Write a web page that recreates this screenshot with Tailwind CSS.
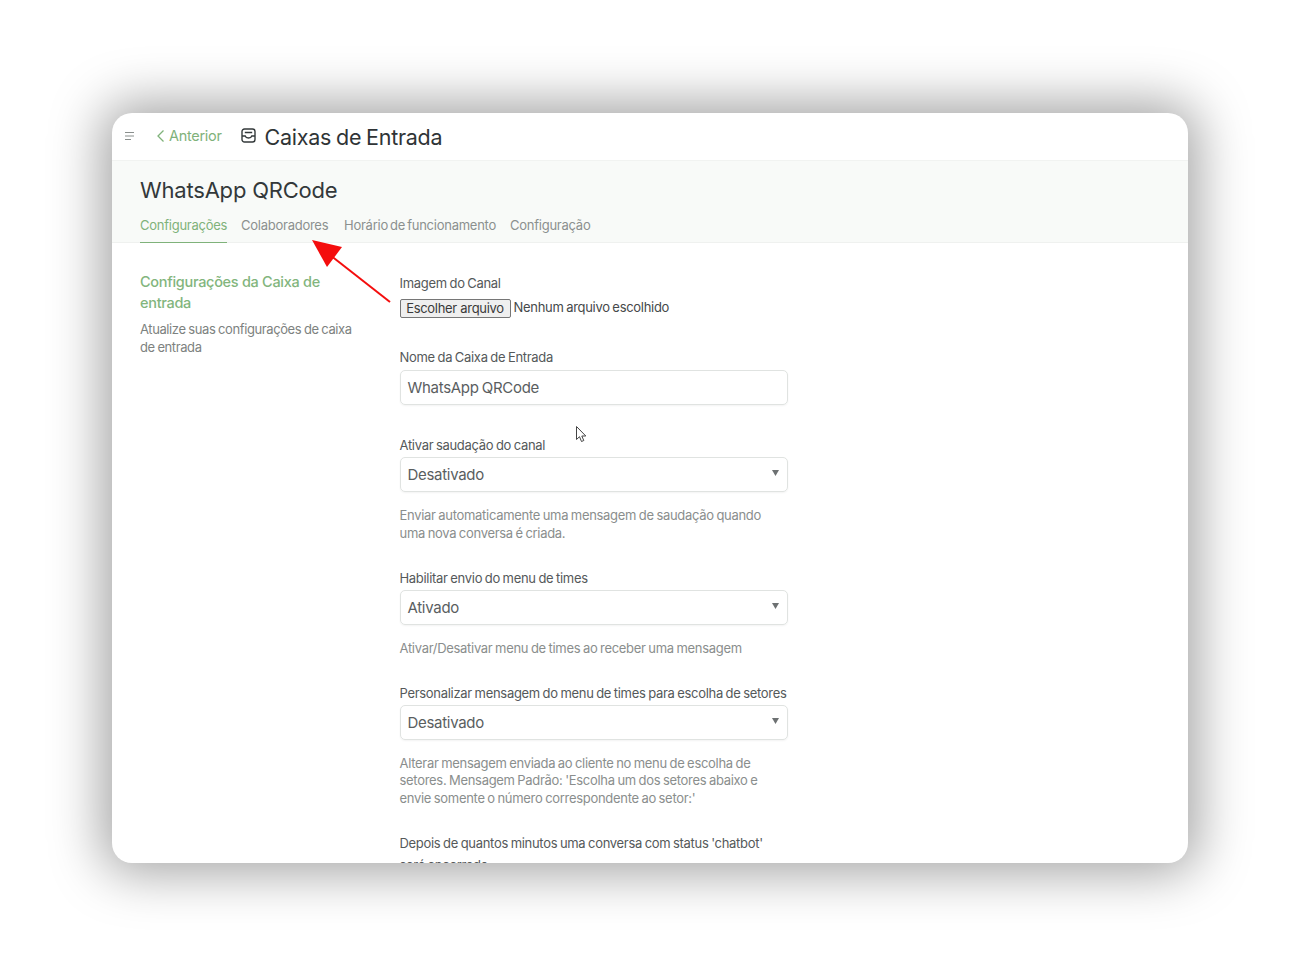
<!DOCTYPE html>
<html lang="pt-BR">
<head>
    <meta charset="UTF-8">
    <title>Caixas de Entrada</title>
    <script src="https://cdn.jsdelivr.net/npm/@tailwindcss/browser@4"></script>
</head>
<body class="bg-white h-[976px] overflow-hidden pt-[113px] font-['Inter',sans-serif] text-[#3c4858]">
    <div class="relative ml-[112px] w-[1076px] h-[750px] bg-white rounded-[20px] shadow-[0_0_52px_10px_rgba(0,0,0,0.36)] overflow-hidden">
        <!-- top bar -->
        <header class="h-[48px] flex items-center border-b border-[#f1f3f1] pl-[12px]">
            <svg class="w-[11px] h-[10px] text-[#8a8f8d] mt-[-2px]" viewBox="0 0 11 10" fill="none" stroke="currentColor" stroke-width="1.1"><path d="M1 1.500h9M1 5h9M1 8.500h6"/></svg>
            <a class="flex items-center ml-[21px] text-[14.500px] tracking-[-0.3px] text-[#7fb27a] mt-[-2px]">
                <svg class="w-[9px] h-[14px] mr-[4px]" viewBox="0 0 9 14" fill="none" stroke="currentColor" stroke-width="1.300"><path d="M7.500 1.500 2 7l5.500 5.500"/></svg>
                Anterior
            </a>
            <svg class="w-[15px] h-[15px] ml-[19px] text-[#33393a] mt-[-2px]" viewBox="0 0 15 15" fill="none" stroke="currentColor" stroke-width="1.400"><rect x="1" y="1" width="13" height="13" rx="2.500"/><path d="M3.800 4.500h7.400M1 8h3.200c.4 1.300 1.600 2 3.300 2s2.900-.7 3.300-2H14"/></svg>
            <h1 class="ml-[9px] text-[21.500px] tracking-[-0.25px] [word-spacing:-1px] text-[#2f3436] pt-[2px]">Caixas de Entrada</h1>
        </header>

        <!-- sub header with tabs -->
        <section class="h-[82px] bg-[#f8faf8] border-b border-[#eff1ef] pl-[28px] flex flex-col">
            <h2 class="text-[22px] leading-[28px] mt-[15px] tracking-[-0.2px] text-[#33383a]">WhatsApp QRCode</h2>
            <nav class="flex gap-[14px] mt-[8px] text-[13px] tracking-[-0.25px] [word-spacing:-1.300px] text-[#8b908f]">
                <a class="h-[31px] pt-[4px] text-[#7fb27a] border-b border-[#7fb27a] w-[87px] whitespace-nowrap">Configurações</a>
                <a class="pt-[4px] w-[89px] whitespace-nowrap">Colaboradores</a>
                <a class="pt-[4px] w-[152px] whitespace-nowrap">Horário de funcionamento</a>
                <a class="pt-[4px] whitespace-nowrap">Configuração</a>
            </nav>
        </section>

        <!-- body -->
        <div class="flex pl-[28px]">
            <aside class="w-[259.500px] shrink-0 pt-[28px]">
                <h3 class="text-[14.500px] leading-[21px] font-medium tracking-[-0.3px] text-[#82b57d] w-[200px]">Configurações da Caixa de entrada</h3>
                <p class="text-[13px] leading-[17.500px] tracking-[-0.4px] [word-spacing:-0.6px] text-[#7d8280] mt-[8px] w-[222px]">Atualize suas configurações de caixa de entrada</p>
            </aside>

            <form class="w-[388.500px] pt-[32px] text-[13px] tracking-[-0.3px] [word-spacing:-0.7px]">
                <label class="block leading-[17px] text-[#55595a]">Imagem do Canal</label>
                <div class="flex items-center mt-[6px] h-[20px]">
                    <button type="button" class="h-[19px] w-[111px] bg-[#efefef] border border-[#767676] rounded-[2px] text-[#3a3a3a] text-[13px] leading-none">Escolher arquivo</button>
                    <span class="ml-[3px] text-[#45494a]">Nenhum arquivo escolhido</span>
                </div>

                <label class="block leading-[17px] text-[#55595a] mt-[31px]">Nome da Caixa de Entrada</label>
                <div class="mt-[4px] h-[35px] border border-[#e0e3e1] rounded-[5px] shadow-[0_1px_2px_rgba(0,0,0,0.05)] flex items-center px-[7px] pt-[2px] text-[15px] tracking-[-0.3px] text-[#5a5e5f]">WhatsApp QRCode</div>

                <label class="block leading-[17px] text-[#55595a] mt-[32px]">Ativar saudação do canal</label>
                <div class="mt-[3px] h-[35px] border border-[#e0e3e1] rounded-[5px] shadow-[0_1px_2px_rgba(0,0,0,0.05)] flex items-center justify-between pl-[7px] pr-[8px] pt-[2px] text-[15px] tracking-[-0.3px] text-[#5a5e5f]">
                    Desativado
                    <svg class="w-[7px] h-[6px] text-[#6d7172] mt-[-5px]" viewBox="0 0 7 6" fill="currentColor"><path d="M0 0h7L3.500 6z"/></svg>
                </div>
                <p class="mt-[15px] leading-[17.500px] text-[#8a8e8d]">Enviar automaticamente uma mensagem de saudação quando uma nova conversa é criada.</p>

                <label class="block leading-[17px] text-[#55595a] mt-[28px]">Habilitar envio do menu de times</label>
                <div class="mt-[3px] h-[35px] border border-[#e0e3e1] rounded-[5px] shadow-[0_1px_2px_rgba(0,0,0,0.05)] flex items-center justify-between pl-[7px] pr-[8px] pt-[2px] text-[15px] tracking-[-0.3px] text-[#5a5e5f]">
                    Ativado
                    <svg class="w-[7px] h-[6px] text-[#6d7172] mt-[-5px]" viewBox="0 0 7 6" fill="currentColor"><path d="M0 0h7L3.500 6z"/></svg>
                </div>
                <p class="mt-[15px] leading-[17.500px] text-[#8a8e8d]">Ativar/Desativar menu de times ao receber uma mensagem</p>

                <label class="block leading-[17px] text-[#55595a] mt-[27px] whitespace-nowrap">Personalizar mensagem do menu de times para escolha de setores</label>
                <div class="mt-[3px] h-[35px] border border-[#e0e3e1] rounded-[5px] shadow-[0_1px_2px_rgba(0,0,0,0.05)] flex items-center justify-between pl-[7px] pr-[8px] pt-[2px] text-[15px] tracking-[-0.3px] text-[#5a5e5f]">
                    Desativado
                    <svg class="w-[7px] h-[6px] text-[#6d7172] mt-[-5px]" viewBox="0 0 7 6" fill="currentColor"><path d="M0 0h7L3.500 6z"/></svg>
                </div>
                <p class="mt-[15px] leading-[17.500px] text-[#8a8e8d]">Alterar mensagem enviada ao cliente no menu de escolha de setores. Mensagem Padrão: 'Escolha um dos setores abaixo e envie somente o número correspondente ao setor:'</p>

                <label class="block leading-[22px] text-[#55595a] mt-[25px]">Depois de quantos minutos uma conversa com status 'chatbot' será encerrada</label>
            </form>
        </div>

        <!-- red arrow annotation -->
        <svg class="absolute left-[190px] top-[120px] w-[100px] h-[80px]" viewBox="0 0 100 80" fill="none">
            <path d="M88 69 28 22" stroke="#f40d0d" stroke-width="2"/>
            <path d="M10 7 40 14 25 34z" fill="#f40d0d"/>
        </svg>

        <!-- mouse cursor -->
        <svg class="absolute left-[463px] top-[312px] w-[13px] h-[19px]" viewBox="0 0 13 19" fill="#fff" stroke="#444" stroke-width="1"><path d="M1.500 1.500v13l3-2.800 2 4.800 2.300-1-2-4.500h4z"/></svg>
    </div>
</body>
</html>
